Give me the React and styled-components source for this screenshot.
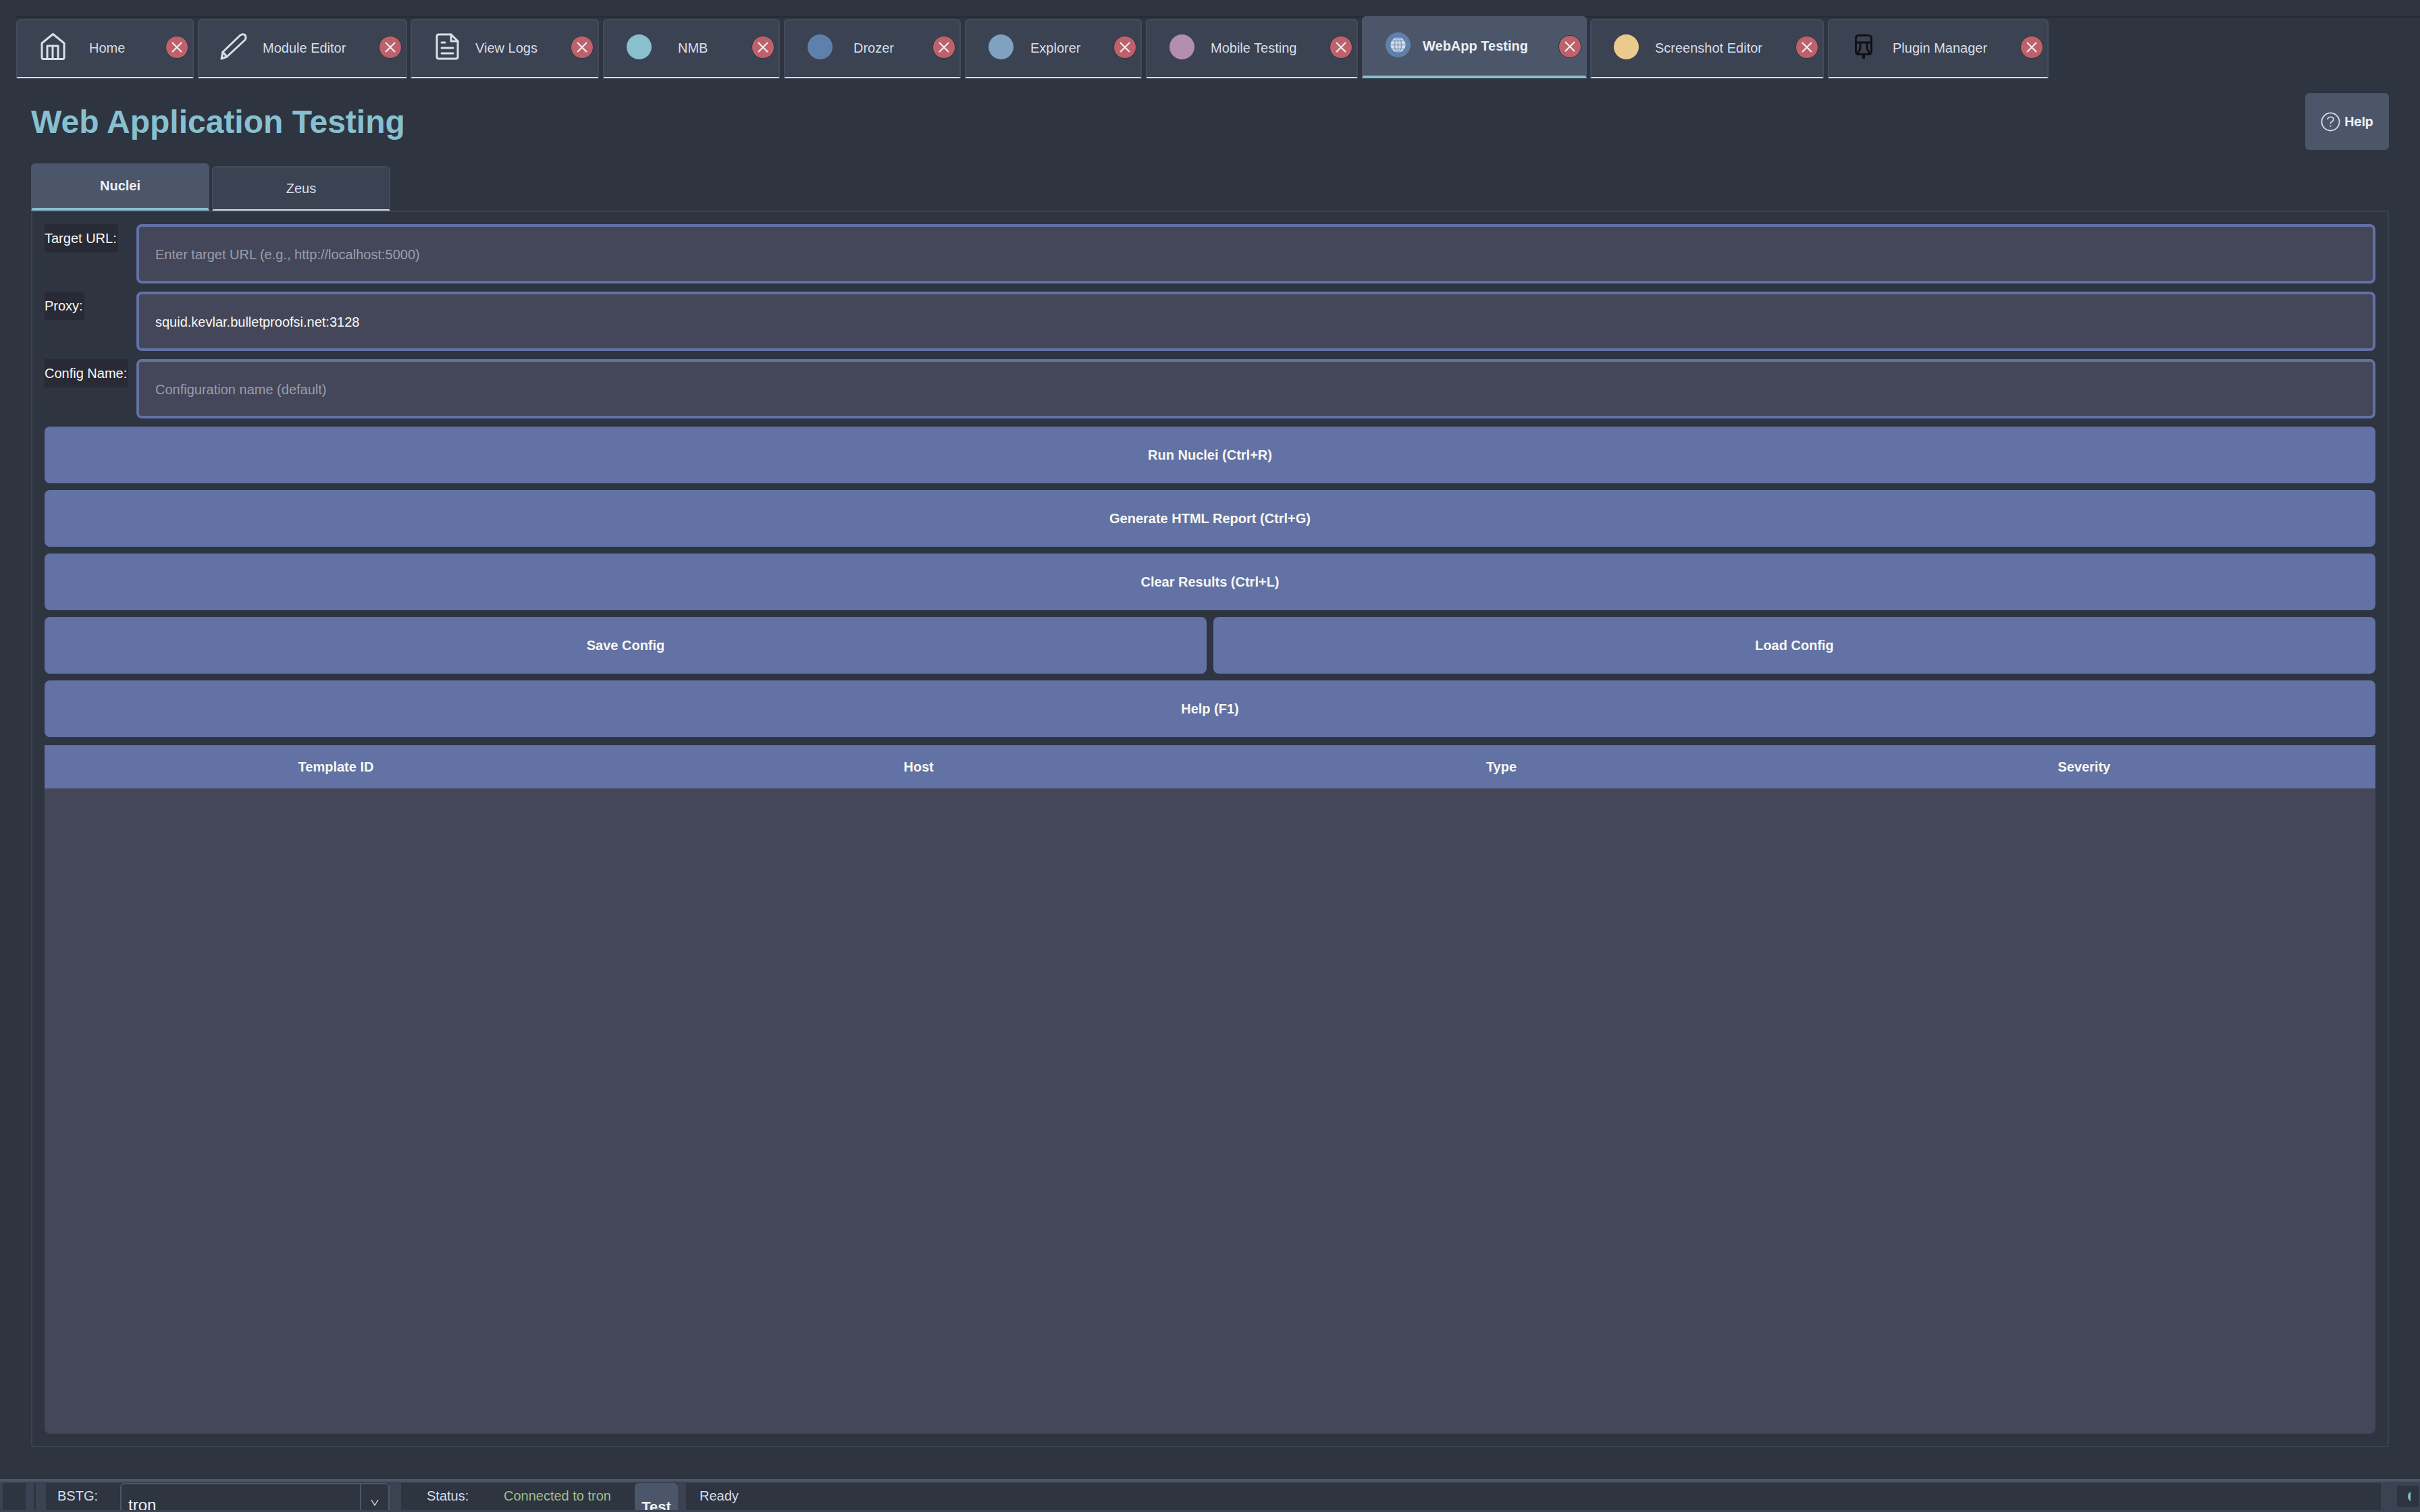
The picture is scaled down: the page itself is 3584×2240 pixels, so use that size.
import React from "react";
import styled, { createGlobalStyle } from "styled-components";

const GlobalStyle = createGlobalStyle`
    html, body {
        margin: 0;
        padding: 0;
        width: 3584px;
        height: 2240px;
        overflow: hidden;
        background: #2e3440;
        font-family: "Liberation Sans", Arial, sans-serif;
    }
    #root {
        height: 100%;
    }
`;

const Window = styled.div`
    width: 3584px;
    height: 2240px;
    display: flex;
    flex-direction: column;
    overflow: hidden;
    background: #2e3440;
`;

const TabBar = styled.div`
    height: 92px;
    margin: 24px 0 0 24px;
    border-top: 2px solid #262b36;
    display: flex;
    align-items: flex-end;
    box-sizing: border-box;
    flex-shrink: 0;
`;

const TabItem = styled.div`
    width: ${(p) => p.$width}px;
    margin-right: ${(p) => p.$gap}px;
    height: ${(p) => (p.$active ? 92 : 88)}px;
    margin-top: ${(p) => (p.$active ? -2 : 0)}px;
    box-sizing: border-box;
    flex-shrink: 0;
    position: relative;
    background: ${(p) => (p.$active ? "#4c566a" : "#3b4252")};
    border: 2px solid ${(p) => (p.$active ? "#4c566a" : "#434c5e")};
    border-bottom: ${(p) => (p.$active ? "4px solid #88c0d0" : "2px solid #d8dee9")};
    border-radius: 6px 6px 0 0;
    color: ${(p) => (p.$active ? "#eceff4" : "#d8dee9")};
    font-size: 20px;
    font-weight: ${(p) => (p.$active ? 700 : 400)};
`;

const TabIcon = styled.span`
    position: absolute;
    left: ${(p) => p.$left}px;
    top: ${(p) => p.$top}px;
    width: 40px;
    height: 40px;
    display: flex;
    align-items: center;
    justify-content: center;
`;

const Dot = styled.span`
    width: 37px;
    height: 37px;
    border-radius: 50%;
    background: ${(p) => p.$color};
`;

const TabLabel = styled.span`
    position: absolute;
    left: ${(p) => p.$left}px;
    top: ${(p) => p.$top}px;
    white-space: nowrap;
    line-height: 24px;
`;

const CloseButton = styled.span`
    position: absolute;
    right: 6px;
    top: ${(p) => p.$top}px;
    width: 34px;
    height: 34px;
    border-radius: 50%;
    background: #bf616a;
    border: 1px solid #2e3440;
    box-sizing: border-box;
    display: flex;
    align-items: center;
    justify-content: center;
`;

const Header = styled.div`
    height: 126px;
    padding: 0 46px;
    display: flex;
    justify-content: space-between;
    align-items: flex-start;
    flex-shrink: 0;
    box-sizing: border-box;
`;

const Title = styled.h1`
    margin: 35px 0 0 0;
    font-size: 48px;
    line-height: 60px;
    font-weight: 700;
    color: #88c0d0;
    white-space: nowrap;
`;

const HelpButton = styled.div`
    width: 124px;
    height: 84px;
    margin: 22px 0 0 0;
    background: #4c566a;
    border-radius: 6px;
    display: flex;
    align-items: center;
    justify-content: center;
    gap: 6px;
    color: #eceff4;
    font-family: Inter, "Liberation Sans", sans-serif;
    font-size: 19px;
    font-weight: 700;
`;

const SubTabs = styled.div`
    height: 70px;
    padding-left: 46px;
    display: flex;
    align-items: flex-end;
    gap: 4px;
    flex-shrink: 0;
`;

const SubTab = styled.div`
    width: 264px;
    height: ${(p) => (p.$active ? 70 : 66)}px;
    box-sizing: border-box;
    padding-bottom: ${(p) => (p.$active ? 2 : 0)}px;
    background: ${(p) => (p.$active ? "#4c566a" : "#3b4252")};
    border: 2px solid ${(p) => (p.$active ? "#4c566a" : "#434c5e")};
    border-bottom: ${(p) => (p.$active ? "4px solid #88c0d0" : "2px solid #d8dee9")};
    border-radius: 6px 6px 0 0;
    display: flex;
    align-items: center;
    justify-content: center;
    color: ${(p) => (p.$active ? "#eceff4" : "#d8dee9")};
    font-size: 20px;
    font-weight: ${(p) => (p.$active ? 700 : 400)};
`;

const Panel = styled.div`
    width: 3492px;
    height: 1832px;
    margin-left: 46px;
    box-sizing: border-box;
    border: 2px solid #3b4252;
    border-radius: 4px;
    padding: 18px;
    display: flex;
    flex-direction: column;
    flex-shrink: 0;
`;

const FormRow = styled.div`
    display: flex;
    align-items: flex-start;
    margin-bottom: 12px;
`;

const FieldLabel = styled.div`
    width: 136px;
    flex-shrink: 0;
`;

const LabelText = styled.span`
    display: inline-block;
    height: 42px;
    line-height: 42px;
    padding-right: 2px;
    background: #282a36;
    color: #f8f8f2;
    font-size: 20px;
    white-space: nowrap;
`;

const FieldInput = styled.div`
    flex: 1;
    height: 88px;
    box-sizing: border-box;
    background: #44475a;
    border: 4px solid #6272a4;
    border-radius: 8px;
    padding: 2px 24px 0 24px;
    display: flex;
    align-items: center;
    font-size: 20px;
    color: ${(p) => (p.$placeholder ? "#9a9daa" : "#f8f8f2")};
`;

const ActionRow = styled.div`
    display: flex;
    gap: 10px;
    margin-bottom: 10px;
`;

const ActionButton = styled.div`
    flex: 1;
    height: 84px;
    background: #6272a4;
    border-radius: 8px;
    display: flex;
    align-items: center;
    justify-content: center;
    color: #f8f8f2;
    font-size: 20px;
    font-weight: 700;
`;

const Table = styled.div`
    margin-top: 2px;
    flex: 1;
    background: #44475a;
    border-radius: 0 0 8px 8px;
    display: flex;
    flex-direction: column;
`;

const TableHead = styled.div`
    height: 64px;
    background: #6272a4;
    display: grid;
    grid-template-columns: repeat(4, 1fr);
    align-items: center;
`;

const HeadCell = styled.div`
    text-align: center;
    color: #f8f8f2;
    font-size: 20px;
    font-weight: 700;
`;

const StatusBar = styled.div`
    margin-top: 47px;
    height: 50px;
    flex-shrink: 0;
    box-sizing: border-box;
    border-top: 4px solid #4c566a;
    background: #3b4252;
    padding: 2px 2px 4px 4px;
    display: flex;
    align-items: stretch;
    overflow: hidden;
    color: #d8dee9;
    font-size: 20px;
`;

const Block = styled.div`
    width: ${(p) => p.$width}px;
    margin-left: ${(p) => p.$left || 0}px;
    flex-shrink: 0;
    background: #2e3440;
`;

const BarGroup = styled.div`
    width: ${(p) => p.$width}px;
    margin-left: ${(p) => p.$left}px;
    flex-shrink: 0;
    background: #2e3440;
    display: flex;
    overflow: hidden;
    position: relative;
`;

const BarLabel = styled.span`
    margin-left: ${(p) => p.$left}px;
    width: ${(p) => p.$width}px;
    flex-shrink: 0;
    line-height: 38px;
    color: ${(p) => p.$color || "#d8dee9"};
    white-space: nowrap;
`;

const Combo = styled.div`
    width: 399px;
    height: 60px;
    flex-shrink: 0;
    box-sizing: border-box;
    border: 2px solid #4c566a;
    border-radius: 6px;
    display: flex;
    font-size: 24px;
    color: #eceff4;
`;

const ComboValue = styled.div`
    flex: 1;
    padding: 16px 0 0 10px;
    line-height: 30px;
`;

const ComboArrow = styled.div`
    width: 42px;
    box-sizing: border-box;
    border-left: 2px solid #4c566a;
    display: flex;
    justify-content: center;
    padding-top: 22px;
`;

const TestButton = styled.div`
    width: 64px;
    height: 60px;
    flex-shrink: 0;
    background: #4c566a;
    border-radius: 6px 6px 0 0;
    text-align: center;
    padding-top: 23px;
    box-sizing: border-box;
    color: #eceff4;
    font-size: 22px;
    font-weight: 700;
`;

const Indicator = styled.div`
    width: 32px;
    height: 32px;
    margin: 4px 0 0 24px;
    flex-shrink: 0;
    background: #2e3440;
    position: relative;
`;

const IndicatorClip = styled.span`
    position: absolute;
    left: 16px;
    top: 8px;
    width: 4px;
    height: 16px;
    overflow: hidden;
`;

const IndicatorDot = styled.span`
    display: block;
    width: 16px;
    height: 16px;
    border-radius: 50%;
    background: #88c0d0;
`;

const iconStroke = { fill: "none", stroke: "#d8dee9", strokeWidth: 3, strokeLinejoin: "round", strokeLinecap: "round" };

const HomeIcon = () => (
    <svg width="37" height="40" viewBox="0 0 37 40" {...iconStroke}>
        <path d="M18.5 1.5 L35 15 V36 Q35 38.5 32.5 38.5 H4.5 Q2 38.5 2 36 V15 Z" />
        <path d="M10 38 V19 H26 V38" />
        <path d="M18 19 V38" />
    </svg>
);

const PenIcon = () => (
    <svg width="40" height="40" viewBox="0 0 40 40" {...iconStroke}>
        <path d="M2 38 L4 28 L30 3 Q34 0.5 37 3 Q39 6.5 37 10 L10 35 Z" />
        <path d="M4 28 L10 35" />
    </svg>
);

const FileIcon = () => (
    <svg width="35" height="40" viewBox="0 0 35 40" {...iconStroke}>
        <path d="M5 2 H23 L33 12 V35 Q33 38 30 38 H5 Q2 38 2 35 V5 Q2 2 5 2 Z" />
        <path d="M23 2 V12 H33" />
        <path d="M9 14 H14 M9 22 H26 M9 30 H26" />
    </svg>
);

const GlobeIcon = () => (
    <svg width="37" height="37" viewBox="0 0 37 37">
        <circle cx="18.5" cy="18.5" r="18.5" fill="#5e81ac" />
        <circle cx="18.5" cy="18.5" r="11" fill="#d8dee9" />
        <g fill="none" stroke="#7f9bc0" strokeWidth="1.4">
            <ellipse cx="18.5" cy="18.5" rx="5" ry="11" />
            <path d="M7.5 18.5 H29.5 M9.5 12.5 H27.5 M9.5 24.5 H27.5 M18.5 7.5 V29.5" />
        </g>
    </svg>
);

const PluginIcon = () => (
    <svg width="30" height="36" viewBox="0 0 30 36" fill="none" stroke="#0f1116" strokeWidth="3">
        <rect x="3.5" y="1.5" width="23" height="28" rx="4" />
        <path d="M3.5 12 H26.5" />
        <path d="M10 12 V21 L6 29 M20 12 V21 L24 29" />
        <path d="M15 29 V36" strokeWidth="4" />
    </svg>
);

const CloseGlyph = () => (
    <svg width="16" height="16" viewBox="0 0 16 16" fill="none" stroke="#eceff4" strokeWidth="2.2">
        <path d="M1 1 L15 15 M15 1 L1 15" />
    </svg>
);

const HelpGlyph = () => (
    <svg width="29" height="29" viewBox="0 0 30 30" fill="none" stroke="#d8dee9" strokeWidth="1.8">
        <circle cx="15" cy="15" r="13.5" />
        <path d="M10.5 11.5 Q11 7.5 15 7.5 Q19.5 7.5 19.5 11 Q19.5 13.5 17 14.5 Q15 15.5 15 18" />
        <path d="M15 20.5 V22.5" />
    </svg>
);

const ChevronGlyph = () => (
    <svg width="12" height="10" viewBox="0 0 12 10" fill="none" stroke="#d8dee9" strokeWidth="1.4">
        <path d="M1 1 L6 9 L11 1" />
    </svg>
);

const tabs = [
    { label: "Home", width: 263, gap: 6, iconLeft: 32, labelLeft: 106, icon: <HomeIcon /> },
    { label: "Module Editor", width: 310, gap: 5, iconLeft: 31, labelLeft: 94, icon: <PenIcon /> },
    { label: "View Logs", width: 279, gap: 6, iconLeft: 32, labelLeft: 94, icon: <FileIcon /> },
    { label: "NMB", width: 262, gap: 6, iconLeft: 31, labelLeft: 109, icon: <Dot $color="#88c0d0" /> },
    { label: "Drozer", width: 262, gap: 6, iconLeft: 31, labelLeft: 101, icon: <Dot $color="#5e81ac" /> },
    { label: "Explorer", width: 262, gap: 6, iconLeft: 31, labelLeft: 95, icon: <Dot $color="#81a1c1" /> },
    { label: "Mobile Testing", width: 314, gap: 6, iconLeft: 31, labelLeft: 94, icon: <Dot $color="#b48ead" /> },
    { label: "WebApp Testing", width: 333, gap: 5, iconLeft: 31, labelLeft: 88, icon: <GlobeIcon />, active: true },
    { label: "Screenshot Editor", width: 346, gap: 6, iconLeft: 31, labelLeft: 94, icon: <Dot $color="#ebcb8b" /> },
    { label: "Plugin Manager", width: 327, gap: 0, iconLeft: 31, labelLeft: 94, icon: <PluginIcon /> },
];

const actions = [
    ["Run Nuclei (Ctrl+R)"],
    ["Generate HTML Report (Ctrl+G)"],
    ["Clear Results (Ctrl+L)"],
    ["Save Config", "Load Config"],
    ["Help (F1)"],
];

const fields = [
    { label: "Target URL:", value: "Enter target URL (e.g., http://localhost:5000)", placeholder: true },
    { label: "Proxy:", value: "squid.kevlar.bulletproofsi.net:3128" },
    { label: "Config Name:", value: "Configuration name (default)", placeholder: true },
];

export default function App() {
    return (
        <Window>
            <GlobalStyle />
            <TabBar>
                {tabs.map((t) => (
                    <TabItem key={t.label} $width={t.width} $gap={t.gap} $active={t.active}>
                        <TabIcon $left={t.iconLeft} $top={t.active ? 20 : 19}>{t.icon}</TabIcon>
                        <TabLabel $left={t.labelLeft} $top={t.active ? 30 : 29}>{t.label}</TabLabel>
                        <CloseButton $top={t.active ? 26 : 23}><CloseGlyph /></CloseButton>
                    </TabItem>
                ))}
            </TabBar>
            <Header>
                <Title>Web Application Testing</Title>
                <HelpButton><HelpGlyph />Help</HelpButton>
            </Header>
            <SubTabs>
                <SubTab $active>Nuclei</SubTab>
                <SubTab>Zeus</SubTab>
            </SubTabs>
            <Panel>
                {fields.map((f) => (
                    <FormRow key={f.label}>
                        <FieldLabel><LabelText>{f.label}</LabelText></FieldLabel>
                        <FieldInput $placeholder={f.placeholder}>{f.value}</FieldInput>
                    </FormRow>
                ))}
                {actions.map((row) => (
                    <ActionRow key={row[0]}>
                        {row.map((a) => <ActionButton key={a}>{a}</ActionButton>)}
                    </ActionRow>
                ))}
                <Table>
                    <TableHead>
                        <HeadCell>Template ID</HeadCell>
                        <HeadCell>Host</HeadCell>
                        <HeadCell>Type</HeadCell>
                        <HeadCell>Severity</HeadCell>
                    </TableHead>
                </Table>
            </Panel>
            <StatusBar>
                <Block $width={34} />
                <Block $width={3} $left={12} />
                <BarGroup $width={509} $left={15}>
                    <BarLabel $left={17} $width={93}>BSTG:</BarLabel>
                    <Combo>
                        <ComboValue>tron</ComboValue>
                        <ComboArrow><ChevronGlyph /></ComboArrow>
                    </Combo>
                </BarGroup>
                <BarGroup $width={410} $left={17}>
                    <BarLabel $left={38} $width={114}>Status:</BarLabel>
                    <BarLabel $left={0} $width={194} $color="#a3be8c">Connected to tron</BarLabel>
                    <TestButton>Test</TestButton>
                </BarGroup>
                <BarGroup $width={2510} $left={12}>
                    <BarLabel $left={20} $width={100}>Ready</BarLabel>
                </BarGroup>
                <Indicator>
                    <IndicatorClip><IndicatorDot /></IndicatorClip>
                </Indicator>
            </StatusBar>
        </Window>
    );
}
